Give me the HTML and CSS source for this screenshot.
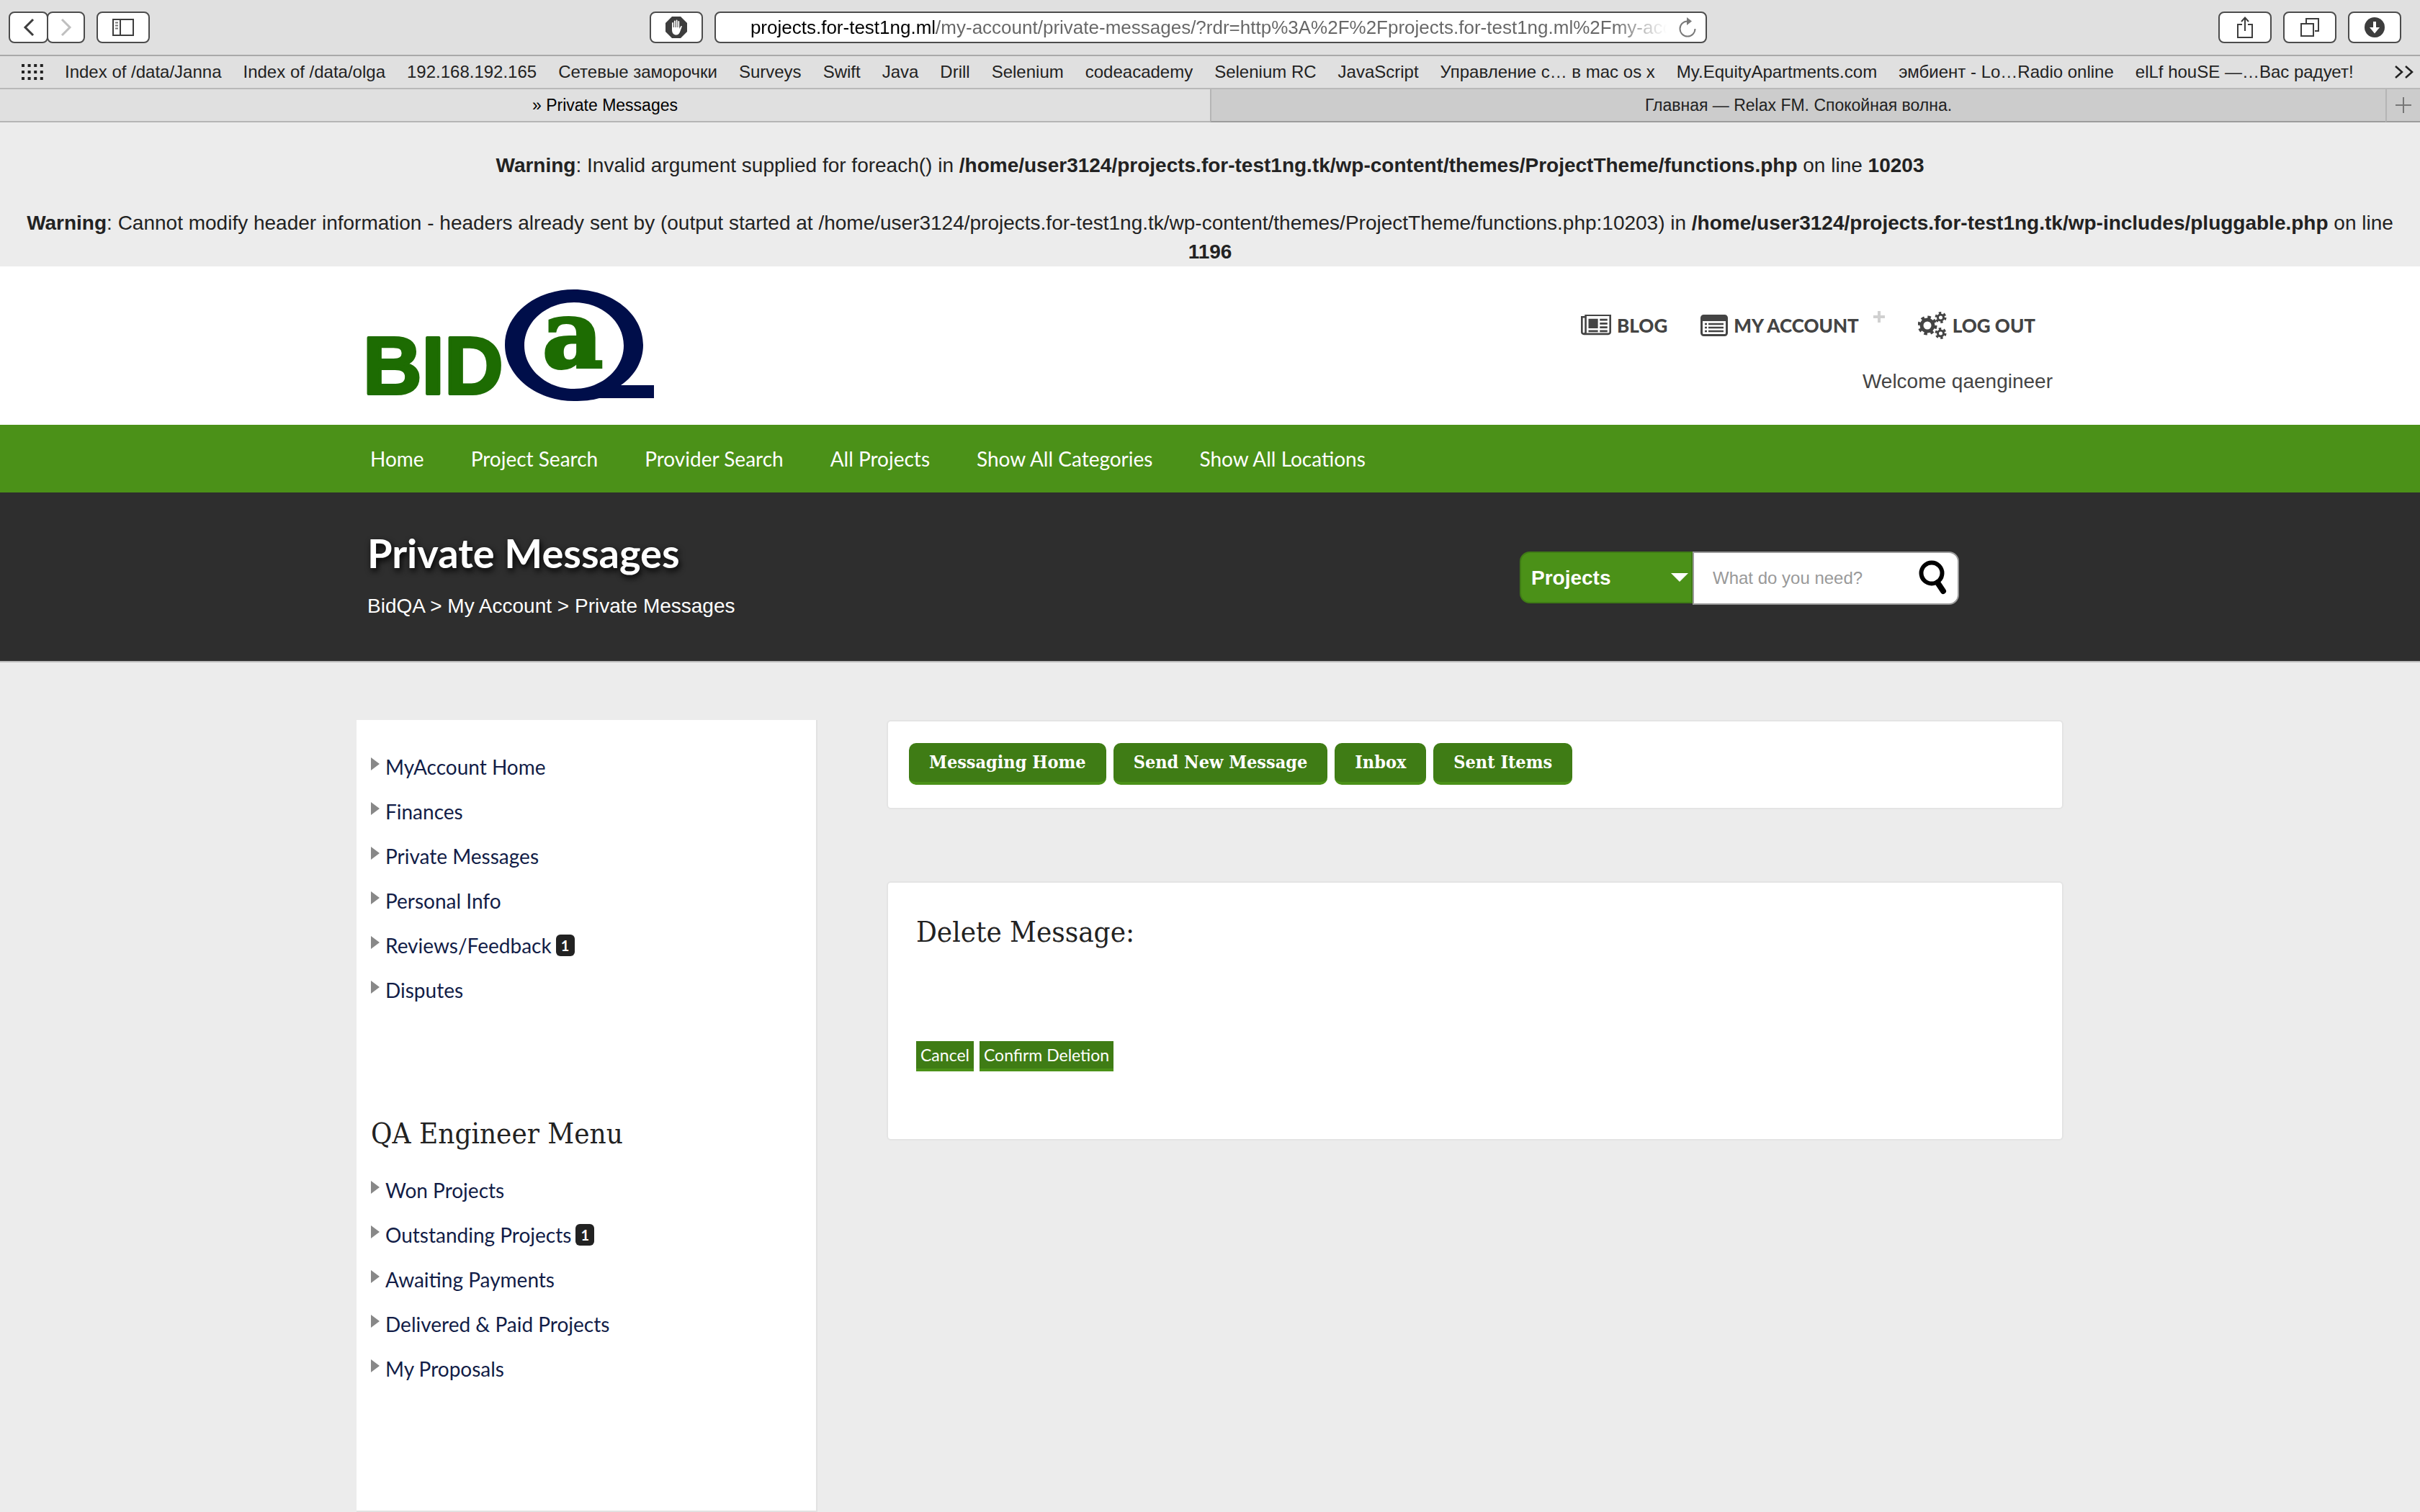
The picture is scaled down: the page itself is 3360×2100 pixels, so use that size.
FILE: index.html
```html
<!DOCTYPE html>
<html lang="en">
<head>
<meta charset="utf-8">
<title>» Private Messages</title>
<link rel="stylesheet" href="styles.css">
</head>
<body>
<div class="browser">
  <div class="toolbar">
    <div class="tool-group">
      <div class="history">
        <button class="tool-button back" type="button" aria-label="Back"><svg width="16" height="28" viewBox="0 0 16 28"><path d="M14 3 3 14l11 11" fill="none" stroke="#3d3d3d" stroke-width="3"/></svg></button>
        <button class="tool-button forward" type="button" aria-label="Forward"><svg width="16" height="28" viewBox="0 0 16 28"><path d="m2 3 11 11L2 25" fill="none" stroke="#bfbfbf" stroke-width="3"/></svg></button>
      </div>
      <button class="tool-button" type="button" aria-label="Sidebar"><svg width="30" height="24" viewBox="0 0 30 24"><path d="M1 1h28v22H1zM11 1v22" fill="none" stroke="#3d3d3d" stroke-width="2"/><path d="M4 5.500h4M4 9.500h4M4 13.500h4" stroke="#777" stroke-width="2"/></svg></button>
    </div>
    <div class="address">
      <button class="tool-button" type="button" aria-label="Content blocker"><svg width="30" height="30" viewBox="0 0 30 30"><path d="M9 0h12l9 9v12l-9 9H9l-9-9V9z" fill="#3d3d3d"/><path d="M10 9v8M12.800 6.500v9M15.600 5.500v9M18.300 7v9" stroke="#fff" stroke-width="1.800" stroke-linecap="round"/><path d="M9 15h10.200v2l2-3.500c.8-1 2-.4 1.500.8L20 21.500c-1.200 2.600-2.600 4-5 4-3.600 0-6-2.500-6-7z" fill="#fff"/></svg></button>
      <div class="url-box">
        <input class="url" type="text" aria-label="Address" value="projects.for-test1ng.ml/my-account/private-messages/?rdr=http%3A%2F%2Fprojects.for-test1ng.ml%2Fmy-account">
        <button class="reload" type="button" aria-label="Reload"><svg width="26" height="30" viewBox="0 0 26 30"><path d="M13 6.500A10.500 10.500 0 1 0 23.500 17" fill="none" stroke="#7a7a7a" stroke-width="2"/><path d="M12 1l7 5.500-7 5.500z" fill="#7a7a7a"/></svg></button>
      </div>
    </div>
    <div class="tool-group tools-end">
      <button class="tool-button" type="button" aria-label="Share"><svg width="24" height="32" viewBox="0 0 24 32"><path d="M8 12H2v18h20V12h-6M12 21V3M7 8l5-5.500L17 8" fill="none" stroke="#3d3d3d" stroke-width="2"/></svg></button>
      <button class="tool-button" type="button" aria-label="Show all tabs"><svg width="26" height="26" viewBox="0 0 26 26"><path d="M1 8h17v17H1zM8 7V1h17v17h-5" fill="none" stroke="#3d3d3d" stroke-width="2"/></svg></button>
      <button class="tool-button" type="button" aria-label="Downloads"><svg width="28" height="28" viewBox="0 0 28 28"><circle cx="14" cy="14" r="14" fill="#3d3d3d"/><path d="M12 6h4v8h5l-7 8.500L7 14h5z" fill="#fff"/></svg></button>
    </div>
  </div>
  <nav class="bookmarks" aria-label="Bookmarks">
    <svg class="dots" width="30" height="22" viewBox="0 0 30 22"><path d="M0 2h30M0 11h30M0 20h30" stroke="#222" stroke-width="4" stroke-dasharray="4 4.600"/></svg>
    <a href="#">Index of /data/Janna</a>
    <a href="#">Index of /data/olga</a>
    <a href="#">192.168.192.165</a>
    <a href="#">Сетевые заморочки</a>
    <a href="#">Surveys</a>
    <a href="#">Swift</a>
    <a href="#">Java</a>
    <a href="#">Drill</a>
    <a href="#">Selenium</a>
    <a href="#">codeacademy</a>
    <a href="#">Selenium RC</a>
    <a href="#">JavaScript</a>
    <a href="#">Управление с… в mac os x</a>
    <a href="#">My.EquityApartments.com</a>
    <a href="#">эмбиент - Lo…Radio online</a>
    <a href="#">elLf houSE —…Вас радует!</a>
    <button class="more" type="button" aria-label="More bookmarks"><svg width="28" height="18" viewBox="0 0 28 18"><path d="m2 1 9 8-9 8M16 1l9 8-9 8" fill="none" stroke="#222" stroke-width="2.500"/></svg></button>
  </nav>
  <div class="tabs">
    <a class="tab tab-current" href="#">» Private Messages</a>
    <a class="tab" href="#">Главная — Relax FM. Спокойная волна.</a>
    <button class="new-tab" type="button" aria-label="New tab"><svg width="22" height="22" viewBox="0 0 22 22"><path d="M11 0v22M0 11h22" stroke="#777" stroke-width="2"/></svg></button>
  </div>
</div>

<div class="warnings">
  <p><b>Warning</b>: Invalid argument supplied for foreach() in <b>/home/user3124/projects.for-test1ng.tk/wp-content/themes/ProjectTheme/functions.php</b> on line <b>10203</b></p>
  <p><b>Warning</b>: Cannot modify header information - headers already sent by (output started at /home/user3124/projects.for-test1ng.tk/wp-content/themes/ProjectTheme/functions.php:10203) in <b>/home/user3124/projects.for-test1ng.tk/wp-includes/pluggable.php</b> on line <b>1196</b></p>
</div>

<header class="site-header">
  <div class="container header-row">
    <a class="logo" href="#" aria-label="BidQA">
      <svg width="400" height="156" viewBox="0 0 400 156">
        <text class="logo-bid" x="-6" y="145">BID</text>
        <path d="M286 0c53 0 96 34 96 77 0 23-12 43-31 56h46v18h-76c-10 3-22 4-35 4-53 0-96-35-96-78s43-77 96-77zm0 18c-38 0-69 26-69 60 0 33 31 60 69 60s69-27 69-60c0-34-31-60-69-60z" fill="#000e4a" transform="translate(1)"/>
        <text class="logo-a" x="243" y="108">a</text>
      </svg>
    </a>
    <div class="account">
      <nav class="account-nav" aria-label="Account">
        <a href="#"><svg width="42" height="30" viewBox="0 256 2048 1408"><path fill="currentColor" d="M1024 1024h-384v-384h384v384zm128 256v128h-640v-128h640zm0-768v640h-640v-640h640zm640 768v128h-512v-128h512zm0-256v128h-512v-128h512zm0-256v128h-512v-128h512zm0-256v128h-512v-128h512zm-1536 896v-960h-128v960q0 26 19 45t45 19 45-19 19-45zm1664 0v-1088h-1536v1088q0 33-11 64h1483q26 0 45-19t19-45zm128-1216v1216q0 80-56 136t-136 56h-1664q-80 0-136-56t-56-136v-1088h256v-128h1792z"/></svg>BLOG</a>
        <a href="#"><svg width="38" height="30" viewBox="0 0 38 30"><rect x="1.500" y="1.500" width="35" height="27" rx="3" fill="none" stroke="currentColor" stroke-width="3"/><path d="M1 2h36v7H1z" fill="currentColor"/><path d="M6 13h3M6 18h3M6 23h3M11 13h21M11 18h21M11 23h21" stroke="currentColor" stroke-width="2.400"/></svg>MY ACCOUNT<svg class="plus" width="16" height="16" viewBox="0 0 16 16"><path d="M8 0v16M0 8h16" stroke="#d0d0d0" stroke-width="4"/></svg></a>
        <a href="#"><svg width="40" height="38" viewBox="0 0 40 38"><g fill="none" stroke="currentColor"><circle cx="13" cy="19" r="8" stroke-width="5"/><circle cx="13" cy="19" r="11.500" stroke-width="4" stroke-dasharray="4.500 4.530"/><circle cx="31.500" cy="8" r="4" stroke-width="3"/><circle cx="31.500" cy="8" r="6.500" stroke-width="3" stroke-dasharray="3.400 3.400"/><circle cx="31.500" cy="30" r="4" stroke-width="3"/><circle cx="31.500" cy="30" r="6.500" stroke-width="3" stroke-dasharray="3.400 3.400"/></g></svg>LOG OUT</a>
      </nav>
      <p class="welcome">Welcome qaengineer</p>
    </div>
  </div>
</header>

<nav class="main-nav" aria-label="Main">
  <div class="container main-nav-row">
    <a href="#">Home</a>
    <a href="#">Project Search</a>
    <a href="#">Provider Search</a>
    <a href="#">All Projects</a>
    <a href="#">Show All Categories</a>
    <a href="#">Show All Locations</a>
  </div>
</nav>

<section class="title-band">
  <div class="container title-row">
    <div>
      <h1>Private Messages</h1>
      <p class="crumbs"><a href="#">BidQA</a> &gt; <a href="#">My Account</a> &gt; Private Messages</p>
    </div>
    <form class="search">
      <div class="search-kind">
        <select aria-label="Search in"><option>Projects</option></select>
        <svg width="24" height="12" viewBox="0 0 24 12"><path d="M0 0h24L12 12z" fill="#fff"/></svg>
      </div>
      <div class="search-box">
        <input type="text" aria-label="Search" placeholder="What do you need?">
        <button type="submit" aria-label="Search"><svg width="40" height="50" viewBox="0 0 40 50"><circle cx="18" cy="18" r="14.500" fill="none" stroke="#000" stroke-width="6"/><path d="m26 31 8 12" stroke="#000" stroke-width="8" stroke-linecap="round"/></svg></button>
      </div>
    </form>
  </div>
</section>

<main class="content">
  <aside class="sidebar">
    <ul class="menu">
      <li><a href="#">MyAccount Home</a></li>
      <li><a href="#">Finances</a></li>
      <li><a href="#">Private Messages</a></li>
      <li><a href="#">Personal Info</a></li>
      <li><a href="#">Reviews/Feedback</a><span class="badge">1</span></li>
      <li><a href="#">Disputes</a></li>
    </ul>
    <h2>QA Engineer Menu</h2>
    <ul class="menu">
      <li><a href="#">Won Projects</a></li>
      <li><a href="#">Outstanding Projects</a><span class="badge">1</span></li>
      <li><a href="#">Awaiting Payments</a></li>
      <li><a href="#">Delivered &amp; Paid Projects</a></li>
      <li><a href="#">My Proposals</a></li>
    </ul>
  </aside>
  <div class="main-column">
    <nav class="card message-nav" aria-label="Messages">
      <a href="#">Messaging Home</a>
      <a href="#">Send New Message</a>
      <a href="#">Inbox</a>
      <a href="#">Sent Items</a>
    </nav>
    <section class="card delete-card">
      <h2>Delete Message:</h2>
      <div class="actions">
        <button type="button">Cancel</button>
        <button type="button">Confirm Deletion</button>
      </div>
    </section>
  </div>
</main>
</body>
</html>
```
FILE: styles.css
```css
* { box-sizing: border-box; }

body {
  margin: 0;
  background: #ececec;
  color: #222;
  font: 28px/40px "Liberation Sans", sans-serif;
}

a { color: inherit; text-decoration: none; }
p, h1, h2, ul { margin: 0; padding: 0; }
svg { display: block; flex: none; }
button { border: 0; padding: 0; background: none; font: inherit; color: inherit; }

/* Browser window */
.browser { background: #e0e0e0; }

.toolbar {
  display: grid;
  grid-template-columns: 12fr 1468px 13fr;
  align-items: center;
  height: 78px;
  padding: 0 26px 0 12px;
  border-bottom: 2px solid #a9a9a9;
}
.tool-group, .address { display: flex; gap: 16px; }
.tools-end { justify-content: flex-end; }
.history { display: flex; }
.tool-button {
  display: flex;
  align-items: center;
  justify-content: center;
  width: 74px;
  height: 44px;
  border: 2px solid #4c4c4c;
  border-radius: 8px;
  background: #fff;
}
.back { width: 55px; margin-right: -2px; }
.forward { width: 53px; }
.url-box {
  display: flex;
  align-items: center;
  flex: 1;
  height: 44px;
  padding: 0 12px 0 48px;
  border: 2px solid #4c4c4c;
  border-radius: 8px;
  background: #fff;
}
.url {
  flex: 1;
  min-width: 0;
  height: 40px;
  padding: 0;
  border: 0;
  outline: 0;
  font: 26px/40px "Liberation Sans", sans-serif;
  color: transparent;
  background: linear-gradient(to right, #000 258px, #666 258px, #666 calc(100% - 90px), transparent calc(100% - 16px));
  -webkit-background-clip: text;
  background-clip: text;
}

.bookmarks {
  display: flex;
  align-items: center;
  gap: 30px;
  height: 46px;
  padding: 0 8px 0 30px;
  border-bottom: 2px solid #b9b9b9;
  font-size: 24px;
  line-height: 44px;
  white-space: nowrap;
}
.more { margin-left: auto; }

.tabs {
  display: grid;
  grid-template-columns: 1680fr 1632fr 48px;
  height: 46px;
  font-size: 23px;
  line-height: 44px;
  text-align: center;
}
.tab, .new-tab { border-bottom: 2px solid #9c9c9c; background: #ccc; }
.tab + .tab, .new-tab { border-left: 2px solid #b5b5b5; }
.tab-current { background: #e0e0e0; border-color: #b5b5b5; color: #000; }
.new-tab { display: flex; align-items: center; justify-content: center; }

/* PHP warnings */
.warnings { display: grid; gap: 40px; padding: 40px 8px 0; text-align: center; }

/* Header */
.container { max-width: 2340px; margin: 0 auto; }
.site-header { background: #fff; }
.header-row { display: flex; justify-content: space-between; padding: 32px 0; }
.logo svg { overflow: visible; }
.logo-bid {
  font: bold 113px "Liberation Sans", sans-serif;
  fill: #1d6c02;
  stroke: #1d6c02;
  stroke-width: 4px;
  stroke-linejoin: round;
}
.logo-a {
  font: bold 130px "DejaVu Serif", serif;
  fill: #1d6c02;
  stroke: #1d6c02;
  stroke-width: 4px;
}
.account { display: grid; align-content: start; gap: 38px; padding-top: 30px; color: #444; }
.account-nav {
  display: flex;
  gap: 46px;
  padding-right: 24px;
  font: 900 26px/40px Lato, sans-serif;
}
.account-nav a { display: flex; align-items: center; gap: 8px; }
.plus { margin: 0 0 24px 12px; }
.welcome { text-align: right; }

.main-nav { background: #4b9118; color: #fff; }
.main-nav-row {
  display: flex;
  gap: 65px;
  padding: 27px 4px;
  font: 28px/40px Lato, sans-serif;
}

.title-band { background: #2e2e2e; border-bottom: 2px solid #bbb; color: #fff; }
.title-row { display: flex; justify-content: space-between; padding: 48px 130px 56px 0; }
h1 {
  font: bold 56px/72px Lato, sans-serif;
  text-shadow: 2px 4px 8px #000;
}
.crumbs { margin-top: 18px; }

.search { display: flex; margin-top: 34px; height: 74px; }
.search-kind { display: grid; align-items: center; width: 240px; height: 72px; }
.search-kind > * { grid-area: 1 / 1; }
.search-kind svg { justify-self: end; margin-right: 6px; pointer-events: none; }
.search select {
  appearance: none;
  width: 100%;
  height: 72px;
  padding: 0 14px;
  border: 2px solid #3f7c15;
  border-radius: 14px 0 0 14px;
  background: #4b9118;
  color: #fff;
  font: bold 28px "Liberation Sans", sans-serif;
}
.search-box {
  display: flex;
  align-items: center;
  width: 370px;
  padding: 0 14px 0 26px;
  border: 2px solid #999;
  border-radius: 0 14px 14px 0;
  background: #fff;
}
.search-box input {
  flex: 1;
  min-width: 0;
  border: 0;
  padding: 0;
  outline: 0;
  background: none;
  font: 24px/36px "Liberation Sans", sans-serif;
}
.search-box input::placeholder { color: #999; opacity: 1; }

/* Content */
.content {
  display: grid;
  grid-template-columns: 640px 1fr;
  gap: 96px;
  align-items: start;
  max-width: 2370px;
  margin: 0 auto;
  padding-top: 80px;
}
.sidebar {
  padding: 34px 20px 166px;
  border: solid #e2e2e2;
  border-width: 0 2px 2px 0;
  background: #fff;
}
h2 { font: 40px/52px "DejaVu Serif Condensed", "DejaVu Serif", serif; }
.sidebar h2 { margin: 142px 0 22px; }
.menu { list-style: none; color: #121d47; font: 28px/62px Lato, sans-serif; }
.menu li { display: flex; align-items: center; height: 62px; }
.menu li::before {
  content: "";
  margin: 0 8px 8px 0;
  border: solid transparent;
  border-width: 9px 0 9px 12px;
  border-left-color: #888;
}
.badge {
  width: 26px;
  height: 30px;
  margin-left: 6px;
  border-radius: 6px;
  background: #222;
  color: #fff;
  font: bold 20px/30px Lato, sans-serif;
  text-align: center;
}

.main-column { display: grid; gap: 100px; }
.card { border: 2px solid #e4e4e4; border-radius: 6px; background: #fff; }
.message-nav { display: flex; gap: 10px; padding: 30px 29px 32px; }
.message-nav a {
  padding: 0 28px;
  border-bottom: 4px solid #4b9118;
  border-radius: 10px;
  background: #3f7c15;
  color: #fff;
  font: bold 25px/54px "DejaVu Serif Condensed", "DejaVu Serif", serif;
}
.delete-card { padding: 42px 39px 94px; }
.actions { display: flex; gap: 8px; margin-top: 126px; }
.actions button {
  padding: 0 6px;
  border-bottom: 4px solid #4b9118;
  background: #3f7c15;
  color: #fff;
  font: 23px/38px Lato, sans-serif;
}
```
